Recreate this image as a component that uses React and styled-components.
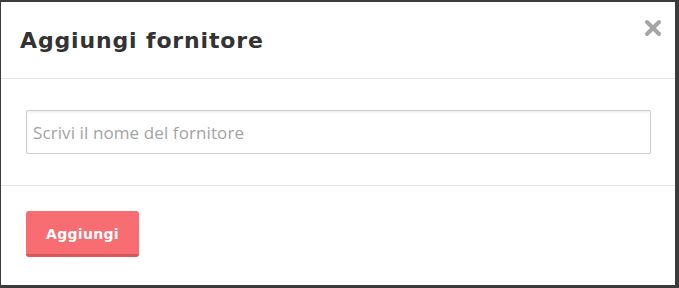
import React from 'react';
import styled, { createGlobalStyle } from 'styled-components';

const GlobalStyle = createGlobalStyle`
  html, body {
    margin: 0;
    padding: 0;
    background: #3b3b3b;
  }
  * {
    box-sizing: border-box;
  }
`;

const Backdrop = styled.div`
  width: 679px;
  height: 288px;
  padding: 2px 4px 3px 1px;
  background: #3b3b3b;
`;

const Modal = styled.div`
  height: 100%;
  background: #fff;
  display: flex;
  flex-direction: column;
  position: relative;
`;

const Header = styled.div`
  height: 77px;
  padding: 0 19px;
  display: flex;
  align-items: center;
  border-bottom: 1px solid #e5e5e5;
`;

const Title = styled.h4`
  margin: 0;
  font-family: "DejaVu Sans", sans-serif;
  font-weight: bold;
  font-size: 22px;
  letter-spacing: 0.85px;
  color: #333;
`;

const Close = styled.button`
  position: absolute;
  top: 14px;
  right: 10px;
  width: 24px;
  height: 24px;
  padding: 0;
  border: 0;
  background: none;
  cursor: pointer;
  display: flex;
  align-items: center;
  justify-content: center;
`;

const Body = styled.div`
  height: 107px;
  padding: 31px 24px 0 25px;
  border-bottom: 1px solid #e5e5e5;
`;

const Input = styled.input`
  width: 100%;
  height: 44px;
  padding: 0 6px;
  border: 1px solid #cfcfcf;
  border-radius: 2px;
  box-shadow: inset 0 1px 2px rgba(0, 0, 0, 0.08), 0 0 2px rgba(0, 0, 0, 0.05);
  font-family: "Open Sans", sans-serif;
  font-size: 17px;
  letter-spacing: 0.1px;
  color: #555;
  outline: none;

  &::placeholder {
    color: #a3a3a3;
  }
`;

const Footer = styled.div`
  flex: 1;
  padding: 25px 25px;
`;

const Button = styled.button`
  width: 113px;
  height: 46px;
  border: 0;
  border-bottom: 3px solid #d7585c;
  border-radius: 3px;
  background: #f76d71;
  color: #fff;
  font-family: "DejaVu Sans", sans-serif;
  font-weight: bold;
  font-size: 14px;
  letter-spacing: 0.3px;
  padding: 2px 0 0;
  cursor: pointer;
`;

function CloseIcon() {
  return (
    <svg width="18" height="18" viewBox="0 0 18 18">
      <path d="M3 3 L15 15 M15 3 L3 15" stroke="#a5a5a5" strokeWidth="4" strokeLinecap="round" />
    </svg>
  );
}

export default function App() {
  return (
    <Backdrop>
      <GlobalStyle />
      <Modal>
        <Header>
          <Title>Aggiungi fornitore</Title>
        </Header>
        <Close aria-label="Chiudi">
          <CloseIcon />
        </Close>
        <Body>
          <Input placeholder="Scrivi il nome del fornitore" />
        </Body>
        <Footer>
          <Button>Aggiungi</Button>
        </Footer>
      </Modal>
    </Backdrop>
  );
}
